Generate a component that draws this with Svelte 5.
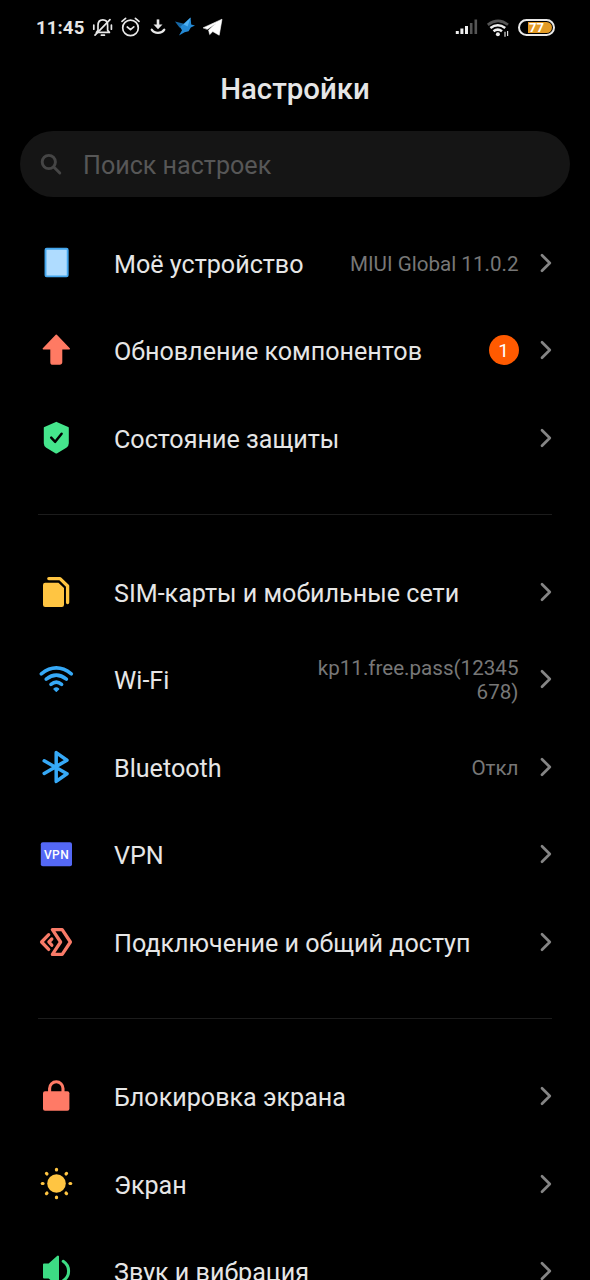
<script lang="ts">
	interface Item {
		icon: string;
		label: string;
		value?: string;
		badge?: number;
	}

	const groups: Item[][] = [
		[
			{ icon: 'device', label: 'Моё устройство', value: 'MIUI Global 11.0.2' },
			{ icon: 'update', label: 'Обновление компонентов', badge: 1 },
			{ icon: 'shield', label: 'Состояние защиты' }
		],
		[
			{ icon: 'sim', label: 'SIM-карты и мобильные сети' },
			{ icon: 'wifi', label: 'Wi-Fi', value: 'kp11.free.pass(12345678)' },
			{ icon: 'bluetooth', label: 'Bluetooth', value: 'Откл' },
			{ icon: 'vpn', label: 'VPN' },
			{ icon: 'share', label: 'Подключение и общий доступ' }
		],
		[
			{ icon: 'lock', label: 'Блокировка экрана' },
			{ icon: 'sun', label: 'Экран' },
			{ icon: 'sound', label: 'Звук и вибрация' }
		]
	];

	const rays = [0, 45, 90, 135, 180, 225, 270, 315];
</script>

{#snippet icon(name: string)}
	<svg class="icon" viewBox="0 0 40 40" fill="none" stroke-linecap="round" stroke-linejoin="round">
		{#if name === 'device'}
			<rect x="9.5" y="5.8" width="22.2" height="27.6" rx="1.2" fill="#afdcff" stroke="#45a7ee" stroke-width="1.9" />
		{:else if name === 'update'}
			<path d="M20.3 5.3 33.2 18.7H25.5V32.2a1.8 1.8 0 0 1-1.8 1.8H16.9a1.8 1.8 0 0 1-1.8-1.8V18.7H7.4Z" fill="#ff7a63" stroke="#ff7a63" stroke-width="1.6" />
		{:else if name === 'shield'}
			<path d="M20.3 4.8 31.8 9.8V25.2Q31.8 27.5 29.8 28.9L20.3 34.6 10.8 28.9Q8.8 27.5 8.8 25.2V9.8Z" fill="#45e58c" stroke="#45e58c" stroke-width="2" />
			<path d="m15.2 19.6 4 4.2 6.4-8" stroke="#000" stroke-width="2.5" />
		{:else if name === 'sim'}
			<path d="M9.2 10.7H22.4L28 16V32.7a2.2 2.2 0 0 1-2.2 2.2H9.2A2.2 2.2 0 0 1 7 32.7V12.9a2.2 2.2 0 0 1 2.2-2.2Z" fill="#ffc542" />
			<path d="M12.8 6.6H24L31.6 14V30.6" stroke="#ffc542" stroke-width="3.3" />
		{:else if name === 'wifi'}
			<g stroke="#36a9f7" stroke-width="3.6">
				<path d="M5.3 14.8Q20.3 3 35.3 14.8" />
				<path d="M10.2 20.1Q20.3 12.1 30.4 20.1" />
				<path d="M15 25.3Q20.3 21.1 25.6 25.3" />
			</g>
			<path d="M18 30Q20.3 28.1 22.6 30L20.3 32.2Z" fill="#36a9f7" stroke="#36a9f7" stroke-width="1.4" />
		{:else if name === 'bluetooth'}
			<path d="M8.2 13.8 31 26.8 20.2 34.4V5.6L31 13.2 8.2 26.4" stroke="#36a9f7" stroke-width="3.5" />
		{:else if name === 'vpn'}
			<rect x="4.8" y="8.3" width="31.2" height="24" rx="2" fill="#5468f5" />
			<text x="20.6" y="24.6" text-anchor="middle" fill="#fff">VPN</text>
		{:else if name === 'share'}
			<g stroke="#f97b68" stroke-width="3.3">
				<path d="M16.4 7.6H26.2L34.4 20 26.2 32.4H16.4L24.6 20Z" />
				<path d="M12.7 12.7 5.6 20l7.1 7.4" />
				<path d="M15.8 17 12.9 20l2.9 3.2" />
			</g>
		{:else if name === 'lock'}
			<rect x="7" y="15.2" width="26.4" height="19.5" rx="2" fill="#ff7a66" />
			<path d="M13.6 16.5V12.5a6.7 6.7 0 0 1 13.4 0V16.5" stroke="#ff7a66" stroke-width="3.1" />
		{:else if name === 'sun'}
			<circle cx="20.5" cy="19.5" r="9.3" fill="#ffc542" />
			{#each rays as angle (angle)}
				<path d="M20.5 5.3v.7" stroke="#ffc542" stroke-width="3.2" transform="rotate({angle} 20.5 19.5)" />
			{/each}
		{:else if name === 'sound'}
			<path d="M8 13.5H13L22 5.6V34L13 26.5H8Z" fill="#3ddc84" stroke="#3ddc84" stroke-width="2" />
			<path d="M27.2 10.3C34.4 15 34.4 25 27.2 29.7" stroke="#3ddc84" stroke-width="3" />
		{/if}
	</svg>
{/snippet}

<div class="screen">
	<header class="status">
		<span class="clock">11:45</span>
		<svg class="tray" viewBox="0 0 134 24" fill="none" stroke="#e8e8e8" stroke-width="1.7" stroke-linecap="round" stroke-linejoin="round">
			<!-- muted bell -->
			<path d="M4.4 17.4H17.4L15.6 15.2V10.4C15.6 7 13.8 4.8 10.8 4.8S6 7 6 10.4V15.2Z" />
			<path d="M9.4 20.2h3M1.8 10v4.2M19.4 10v4.2M3 20.2 18 4.6" />
			<!-- alarm -->
			<circle cx="38.5" cy="12.9" r="7.8" />
			<path d="m35.3 12 3.2 2.6 3.3-2.8M30 6.4l3.6-3M47 6.4l-3.6-3" />
			<!-- download -->
			<path d="M66 4.4v6" stroke-width="2.6" stroke-linecap="butt" />
			<path d="M61.5 9.4h9L66 14.2Z" fill="#e8e8e8" stroke="none" />
			<path d="M59.7 14.6C62.4 19 69.6 19 72.3 14.6" stroke-width="2.2" />
			<!-- bird -->
			<g stroke="none">
				<path d="M83 6.4 92 8.8 94.5 12 87.5 12.6Z" fill="#1667a5" />
				<path d="M98.6 2.4 99.2 9.4 103 10.4 98.8 12.4 96.6 16.2 92.6 17.2 87 20.6 90 15.3 88 12Z" fill="#2489d4" />
				<path d="M98.6 2.4 95.6 11.4 91.6 9.6Z" fill="#4fb0f2" />
			</g>
			<!-- paper plane -->
			<path d="M111.4 12.7 130 4.2 127.2 20.2 120.8 16.6 117.7 19.6 116.6 15 124.2 8.2 115.4 14.2Z" fill="#fff" stroke="#fff" stroke-width="0.6" />
		</svg>
		<svg class="signal" viewBox="0 0 54 24" fill="none">
			<path d="M2.3 19v-3M6.9 19v-5.5M11.5 19v-8" stroke="#eee" stroke-width="3" />
			<path d="M16.2 19v-11M20.8 19V4.5" stroke="#555" stroke-width="2.6" />
			<path d="M32.8 9.8Q43.2 2 53 9.8" stroke="#555" stroke-width="2.7" />
			<path d="M35.4 13Q42.8 7.5 50.2 13M38.5 16.3Q42.8 12.9 47 16.3" stroke="#eee" stroke-width="2.6" />
			<circle cx="42.9" cy="19.3" r="2" fill="#eee" />
			<path d="M50 21.8v-5M52.6 16v5" stroke="#ddd" stroke-width="1.2" />
		</svg>
		<span class="battery"><span class="charge">77</span></span>
	</header>

	<h1>Настройки</h1>

	<div class="search">
		<svg viewBox="0 0 24 24" fill="none" stroke="#454545" stroke-width="2.9" stroke-linecap="round">
			<circle cx="8.8" cy="10" r="6.6" />
			<path d="m13.8 15 6 6" />
		</svg>
		<span>Поиск настроек</span>
	</div>

	<main>
		{#each groups as group, g (g)}
			<section>
				{#each group as item (item.icon)}
					<div class="row">
						{@render icon(item.icon)}
						<span class="label">{item.label}</span>
						{#if item.value}
							<span class="value">{item.value}</span>
						{/if}
						{#if item.badge}
							<span class="badge">{item.badge}</span>
						{/if}
						<svg class="chevron" viewBox="0 0 12 20" fill="none">
							<path d="m2 2.2 7.8 7.8L2 17.8" stroke="#858585" stroke-width="2.7" stroke-linecap="round" stroke-linejoin="round" />
						</svg>
					</div>
				{/each}
			</section>
		{/each}
	</main>
</div>

<style>
	:global(body) {
		background: #000;
	}
	.screen {
		width: 590px;
		height: 1280px;
		overflow: hidden;
		background: #000;
		color: #e6e6e6;
		font-family: Roboto, 'Noto Sans', sans-serif;
	}
	.status {
		display: flex;
		align-items: center;
		height: 54px;
		padding: 0 35px 0 36px;
	}
	.clock {
		width: 56px;
		padding-top: 1px;
		font-size: 18.6px;
		font-weight: 700;
		letter-spacing: 0.1px;
	}
	.tray {
		width: 134px;
		height: 24px;
	}
	.signal {
		width: 54px;
		height: 24px;
		margin-left: auto;
	}
	.battery {
		box-sizing: border-box;
		display: flex;
		justify-content: flex-end;
		width: 37px;
		height: 17px;
		margin-left: 9px;
		padding: 1px;
		border: 2px solid #e8e8e8;
		border-radius: 9px;
	}
	.charge {
		width: 24px;
		border-radius: 0 6px 6px 0;
		background: #e29a24;
		color: #fff;
		font-size: 13px;
		font-weight: 700;
		line-height: 12px;
		text-indent: 1px;
	}
	h1 {
		margin: 0;
		height: 77px;
		font-size: 29.4px;
		font-weight: 500;
		line-height: 70px;
		text-align: center;
	}
	.search {
		display: flex;
		align-items: center;
		gap: 19px;
		height: 66px;
		margin: 0 20px;
		padding-left: 20px;
		box-sizing: border-box;
		border-radius: 33px;
		background: #151515;
		color: #575757;
		font-size: 25.1px;
	}
	.search svg {
		width: 24px;
		height: 24px;
	}
	.search span {
		padding-top: 2px;
	}
	main {
		padding: 22px 38px 0;
	}
	section + section {
		margin-top: 32px;
		padding-top: 33.7px;
		border-top: 1px solid #1c1c1c;
	}
	.row {
		display: flex;
		align-items: center;
		height: 87.5px;
	}
	.icon {
		flex: none;
		width: 40px;
		height: 40px;
		margin: 0 38px 0 -2px;
	}
	.icon text {
		font-size: 12px;
		font-weight: 500;
		letter-spacing: 0.5px;
	}
	.label {
		flex: 1;
		padding-top: 3px;
		font-size: 25.12px;
		white-space: nowrap;
	}
	.value {
		max-width: 204px;
		padding-top: 2px;
		color: #777;
		font-size: 20.6px;
		line-height: 24px;
		text-align: right;
		overflow-wrap: anywhere;
	}
	.badge {
		width: 30px;
		height: 30px;
		border-radius: 50%;
		background: #ff5a00;
		color: #fff;
		font-size: 19px;
		line-height: 31px;
		text-align: center;
	}
	.chevron {
		flex: none;
		width: 12px;
		height: 20px;
		margin-left: 21.5px;
	}
</style>
